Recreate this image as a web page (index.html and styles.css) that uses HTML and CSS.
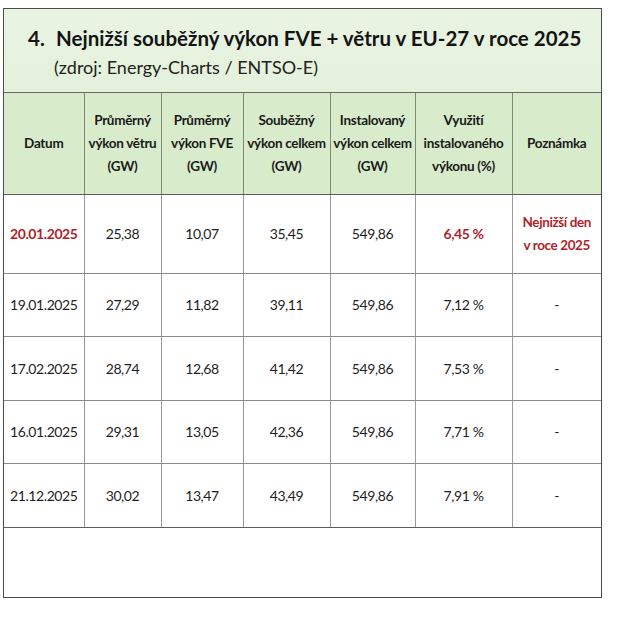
FILE: index.html
```html
<!DOCTYPE html>
<html lang="cs">
<head>
<meta charset="utf-8">
<title>Nejnižší souběžný výkon FVE + větru</title>
<link rel="stylesheet" href="styles.css">
</head>
<body>
<div class="page">
  <div class="sheet">
    <div class="caption">
      <div class="caption-title"><span class="num">4.</span>Nejnižší souběžný výkon FVE + větru v EU-27 v roce 2025</div>
      <div class="caption-source">(zdroj: Energy-Charts / ENTSO-E)</div>
    </div>
    <table class="data">
      <colgroup>
        <col class="c1"><col class="c2"><col class="c3"><col class="c4"><col class="c5"><col class="c6"><col class="c7">
      </colgroup>
      <thead>
        <tr>
          <th>Datum</th>
          <th>Průměrný<br>výkon větru<br>(GW)</th>
          <th>Průměrný<br>výkon FVE<br>(GW)</th>
          <th>Souběžný<br>výkon celkem<br>(GW)</th>
          <th>Instalovaný<br>výkon celkem<br>(GW)</th>
          <th>Využití<br>instalovaného<br>výkonu (%)</th>
          <th>Poznámka</th>
        </tr>
      </thead>
      <tbody>
        <tr class="first">
          <td class="hl">20.01.2025</td>
          <td>25,38</td>
          <td>10,07</td>
          <td>35,45</td>
          <td>549,86</td>
          <td class="hl">6,45 %</td>
          <td class="hl note">Nejnižší den<br>v roce 2025</td>
        </tr>
        <tr>
          <td>19.01.2025</td><td>27,29</td><td>11,82</td><td>39,11</td><td>549,86</td><td>7,12 %</td><td>-</td>
        </tr>
        <tr>
          <td>17.02.2025</td><td>28,74</td><td>12,68</td><td>41,42</td><td>549,86</td><td>7,53 %</td><td>-</td>
        </tr>
        <tr>
          <td>16.01.2025</td><td>29,31</td><td>13,05</td><td>42,36</td><td>549,86</td><td>7,71 %</td><td>-</td>
        </tr>
        <tr class="last">
          <td>21.12.2025</td><td>30,02</td><td>13,47</td><td>43,49</td><td>549,86</td><td>7,91 %</td><td>-</td>
        </tr>
      </tbody>
    </table>
    <div class="blank"></div>
  </div>
</div>
</body>
</html>
```
FILE: styles.css
```css
html, body {
  margin: 0;
  padding: 0;
  background: #ffffff;
}
body {
  font-family: Lato, "Open Sans", "Liberation Sans", sans-serif;
  color: #1c1c1c;
}
.page {
  padding: 8px 0 0 3px;
}
.sheet {
  width: 599px;
  box-sizing: border-box;
  border: 1.5px solid #4a4a4a;
  background: #ffffff;
}
.caption {
  height: 84px;
  box-sizing: border-box;
  background: linear-gradient(180deg, #e9f4e2 0%, #e4f1dc 100%);
  border-bottom: 1.5px solid #6a6a6a;
  padding: 15px 0 0 24px;
}
.caption-title {
  font-weight: 700;
  font-size: 20.5px;
  line-height: 28px;
  color: #141414;
  white-space: nowrap;
}
.caption-title .num {
  display: inline-block;
  width: 28px;
}
.caption-source {
  font-size: 18px;
  line-height: 24px;
  color: #222;
  padding-left: 26px;
  margin-top: 3px;
}
.data {
  width: 100%;
  border-collapse: collapse;
  table-layout: fixed;
}
.c1 { width: 80px; }
.c2 { width: 77px; }
.c3 { width: 82px; }
.c4 { width: 87px; }
.c5 { width: 85px; }
.c6 { width: 97px; }
.c7 { width: auto; }
.data th, .data td {
  text-align: center;
  vertical-align: middle;
  padding: 0;
  white-space: nowrap;
  border-left: 1px solid #9a9a9a;
  border-right: 1px solid #9a9a9a;
}
.data th:first-child, .data td:first-child { border-left: none; }
.data th:last-child, .data td:last-child { border-right: none; }
.data thead tr {
  height: 101px;
  background: #d8ebcb;
}
.data th {
  font-weight: 700;
  font-size: 13.5px;
  letter-spacing: -0.3px;
  line-height: 23px;
  color: #1a1a1a;
  border-bottom: 1.5px solid #5c5c5c;
  border-left-color: #7d8a74;
  border-right-color: #7d8a74;
}
.data td {
  font-size: 14px;
  letter-spacing: -0.4px;
  color: #1e1e1e;
  border-bottom: 1px solid #8a8a8a;
}
.data tbody tr { height: 63.5px; }
.data tbody tr.first { height: 79px; }
.data tbody tr.last td { border-bottom: 1.5px solid #5c5c5c; }
.data td.hl {
  color: #b01f2a;
  font-weight: 700;
}
.data td.note {
  font-size: 13.5px;
  letter-spacing: -0.4px;
  line-height: 23px;
}
.blank {
  height: 69px;
}
```
